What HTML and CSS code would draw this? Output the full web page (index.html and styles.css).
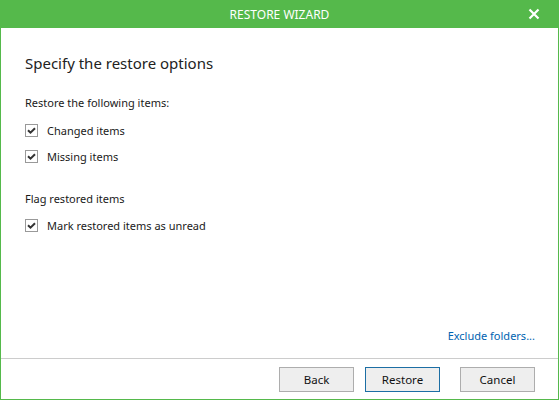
FILE: index.html
```html
<!DOCTYPE html>
<html>
<head>
<meta charset="utf-8">
<link rel="stylesheet" href="styles.css">
</head>
<body>
<div class="window">
  <div class="titlebar">
    <span class="title">RESTORE WIZARD</span>
    <span class="close"><svg width="12" height="12" viewBox="0 0 12 12"><path d="M1.5 1.5 L10.5 10.5 M10.5 1.5 L1.5 10.5" stroke="#fff" stroke-width="2.2"/></svg></span>
  </div>
  <div class="content">
    <h1 class="heading">Specify the restore options</h1>
    <div class="group-label">Restore the following items:</div>
    <label class="check"><span class="box"><svg width="11" height="11" viewBox="0 0 11 11"><path d="M2 5.2 L4.5 7.7 L9 3.2" stroke="#333" stroke-width="2" fill="none"/></svg></span>Changed items</label>
    <label class="check"><span class="box"><svg width="11" height="11" viewBox="0 0 11 11"><path d="M2 5.2 L4.5 7.7 L9 3.2" stroke="#333" stroke-width="2" fill="none"/></svg></span>Missing items</label>
    <div class="group-label second">Flag restored items</div>
    <label class="check"><span class="box"><svg width="11" height="11" viewBox="0 0 11 11"><path d="M2 5.2 L4.5 7.7 L9 3.2" stroke="#333" stroke-width="2" fill="none"/></svg></span>Mark restored items as unread</label>
    <div class="spacer"></div>
    <div class="link-row"><a class="link">Exclude folders...</a></div>
  </div>
  <div class="footer">
    <button class="btn">Back</button>
    <button class="btn primary">Restore</button>
    <button class="btn cancel">Cancel</button>
  </div>
</div>
</body>
</html>
```
FILE: styles.css
```css
* { box-sizing: border-box; }
html, body { margin: 0; padding: 0; background: #fff; }
body { font-family: "Noto Sans", "Open Sans", sans-serif; font-size: 11px; color: #1a1a1a; }
.window {
  width: 559px;
  height: 400px;
  border: 1px solid #55b94b;
  border-top: none;
  display: flex;
  flex-direction: column;
  background: #fff;
}
.titlebar {
  height: 28px;
  background: #55b94b;
  margin: 0 -1px;
  display: flex;
  align-items: center;
  justify-content: center;
  position: relative;
  color: #fff;
}
.title { font-size: 12px; letter-spacing: 0; }
.close { position: absolute; right: 19px; top: 8px; width: 12px; height: 12px; display: flex; }
.content {
  flex: 1;
  padding: 24px 23px 0 24px;
  display: flex;
  flex-direction: column;
}
.heading {
  margin: 0;
  font-size: 15px;
  font-weight: normal;
  line-height: 22px;
  color: #222;
}
.group-label { margin-top: 20px; line-height: 17px; }
.group-label.second { margin-top: 25px; }
.check { display: flex; align-items: center; line-height: 17px; margin-top: 11px; }
.check + .check { margin-top: 9px; }
.group-label.second + .check { margin-top: 10px; }
.box {
  width: 13px; height: 13px;
  border: 1px solid #999;
  margin-right: 9px;
  display: flex; align-items: center; justify-content: center;
}
.spacer { flex: 1; }
.link-row { display: flex; justify-content: flex-end; margin-bottom: 14px; }
.link { color: #0063b1; line-height: 17px; }
.footer {
  height: 41px;
  border-top: 1px solid #ccc;
  display: flex;
  align-items: flex-start;
  justify-content: flex-end;
  padding: 8px 23px 0 0;
}
.btn {
  width: 75px; height: 25px;
  background: #eeeeee;
  border: 1px solid #adadad;
  font-family: inherit;
  font-size: 11.5px;
  color: #111;
  padding: 0;
  margin-left: 11px;
}
.btn.primary { border-color: #1c6ea4; }
.btn.cancel { margin-left: 20px; }
```
